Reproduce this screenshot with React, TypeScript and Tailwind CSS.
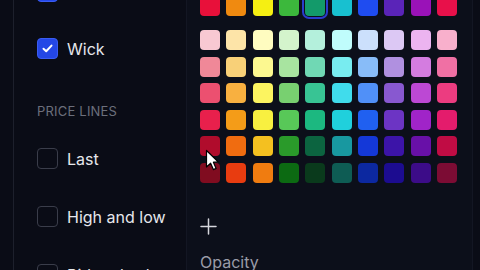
import React from 'react';

const topRow = ['#e8103a', '#f08a10', '#f5ef12', '#3cb83c', '#139a6a', '#18c0d0', '#1f4cf0', '#5a24b8', '#9a12b8', '#e8104a'];

const shades: string[][] = [
    ['#f8c8d2', '#fde4a8', '#fefcc0', '#d4f4cc', '#b4f0dc', '#c0fcfc', '#cce0fc', '#dcc8f4', '#ecb4f0', '#f8b0cc'],
    ['#f08898', '#f8d078', '#fcf890', '#a8e4a0', '#70d8b4', '#78ecf0', '#88bcf8', '#b090e0', '#d47ce0', '#f070a4'],
    ['#ec5070', '#f8b040', '#fcf460', '#78d070', '#38c494', '#40dcec', '#5090f8', '#8858d0', '#bc48d4', '#ec3c80'],
    ['#e8204c', '#f49c18', '#f8f040', '#58c858', '#1cb880', '#20d0dc', '#2060f0', '#6c34c4', '#a024c8', '#e41c6c'],
    ['#b00c2c', '#f06c10', '#f4c020', '#2a9a2a', '#0c6440', '#1898a0', '#1438d8', '#3c14a8', '#6810a8', '#c00c44'],
    ['#800c20', '#e83c10', '#f07c10', '#0c6a12', '#0a3a1c', '#0e5c54', '#0c28a0', '#1c0c90', '#3c0c88', '#7c0c34'],
];

const Checkbox = ({ checked }: { checked?: boolean }) =>
    checked ? (
        <span className="w-[21px] h-[21px] rounded-[4px] bg-[#2447e6] border border-[#3a5cf2] flex items-center justify-center shrink-0">
            <svg width="13" height="13" viewBox="0 0 13 13" fill="none">
                <path d="M2.5 6.8 L5.2 9.3 L10.5 3.6" stroke="white" strokeWidth="2" strokeLinecap="round" strokeLinejoin="round" />
            </svg>
        </span>
    ) : (
        <span className="w-[21px] h-[21px] rounded-[4px] border-[1.5px] border-[#3a3d4a] shrink-0" />
    );

const Option = ({ label, checked }: { label: string; checked?: boolean }) => (
    <div className="h-[21px] flex items-center gap-[9px]">
        <Checkbox checked={checked} />
        <span className="text-[16px] leading-none text-[#e6e7ec] whitespace-nowrap">{label}</span>
    </div>
);

const App: React.FC = () => {
    return (
        <div className="w-[480px] h-[270px] overflow-hidden bg-[#0a0c16] flex flex-row relative" style={{ fontFamily: 'Inter, "Noto Sans", sans-serif' }}>
            <div className="w-[14px] shrink-0 border-r border-[#1d202c]" />
            <div className="w-[172px] shrink-0 pl-[23px] flex flex-col">
                <div className="-mt-[19px]">
                    <Option label="Candles" checked />
                </div>
                <div className="mt-[36px]">
                    <Option label="Wick" checked />
                </div>
                <div className="mt-[45px] h-[16px] flex items-center text-[13px] tracking-[0.2px] text-[#6c6f7c] whitespace-nowrap">PRICE LINES</div>
                <div className="mt-[28px] flex flex-col gap-[37px]">
                    <Option label="Last" />
                    <Option label="High and low" />
                    <Option label="Bid and ask" />
                </div>
            </div>
            <div className="w-[287px] shrink-0 bg-[#0c0f1a] border-l border-r border-[#131623] pl-[13px] flex flex-col">
                <div className="-mt-[4px] grid grid-cols-[repeat(10,20px)] gap-x-[6.33px]">
                    {topRow.map((c, i) => (
                        <div key={i} className={i === 4 ? 'w-[20px] h-[20px] rounded-[4px] ring-2 ring-[#2a3ccc] ring-offset-1 ring-offset-[#0c0f1a]' : 'w-[20px] h-[20px] rounded-[4px]'} style={{ backgroundColor: c }} />
                    ))}
                </div>
                <div className="mt-[14px] grid grid-cols-[repeat(10,20px)] gap-x-[6.33px] gap-y-[6.5px]">
                    {shades.flat().map((c, i) => (
                        <div key={i} className="w-[20px] h-[20px] rounded-[4px]" style={{ backgroundColor: c }} />
                    ))}
                </div>
                <div className="mt-[16px] w-[257px] h-px bg-[#2a2d39]" />
                <div className="mt-[19px] w-[17px] h-[17px] flex items-center justify-center">
                    <svg width="17" height="17" viewBox="0 0 17 17" fill="none">
                        <path d="M8.5 1 V16 M1 8.5 H16" stroke="#d6d7dd" strokeWidth="1.5" strokeLinecap="round" />
                    </svg>
                </div>
                <div className="mt-[17px] text-[16px] leading-[20px] text-[#9a9ca8]">Opacity</div>
            </div>
            <svg className="absolute left-[205px] top-[149px]" width="15" height="23" viewBox="0 0 15 23" fill="none">
                <path d="M1.5 1.5 L1.5 18 L5.6 14.2 L8.4 20.6 L11.1 19.4 L8.4 13.2 L13.6 13.2 Z" fill="white" stroke="black" strokeWidth="1.2" strokeLinejoin="round" />
            </svg>
        </div>
    );
};

export default App;
